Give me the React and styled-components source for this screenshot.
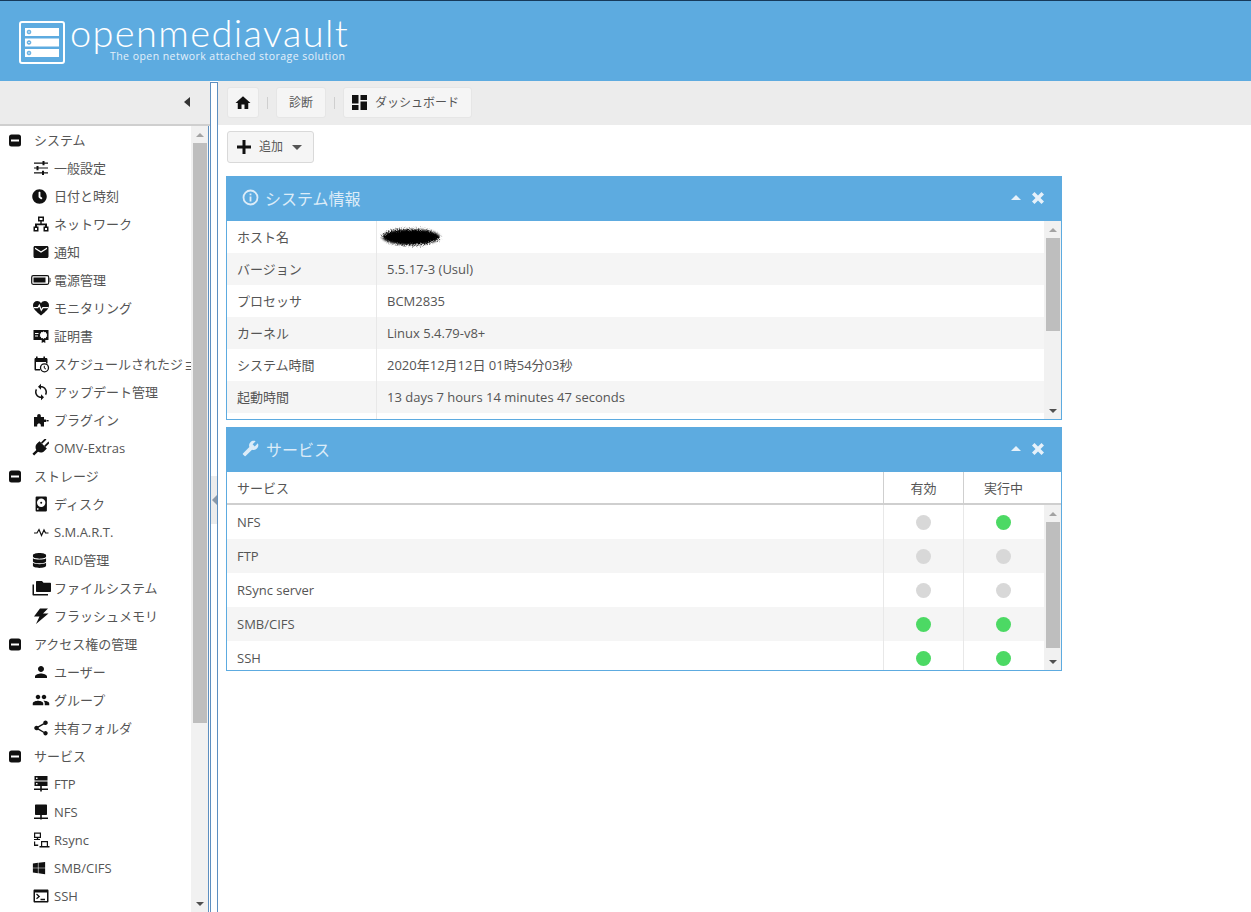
import React from "react";
import styled, { createGlobalStyle } from "styled-components";
import { MdEmail, MdSync, MdPerson, MdPeople, MdShare, MdHome, MdBuild } from "react-icons/md";
import { FaDatabase, FaWindows, FaClock } from "react-icons/fa";

const FONT = `"Open Sans", "Noto Sans CJK JP", sans-serif`;
const isCjk = (s) => /[^\x00-\x7f]/.test(s || "");

const Global = createGlobalStyle`
  html, body { margin: 0; padding: 0; height: 100%; overflow: hidden; background: #fff; }
  body { font-family: ${FONT}; font-size: 13px; color: #555; }
  * { box-sizing: border-box; }
`;

const Page = styled.div`
  width: 1251px;
  height: 912px;
  display: flex;
  flex-direction: column;
  overflow: hidden;
`;

const Header = styled.header`
  height: 81px;
  flex: none;
  background: #5dabe0;
  border-top: 1px solid #16395a;
  display: flex;
  align-items: flex-start;
  padding: 20px 0 0 19px;
`;

const Brand = styled.div`
  display: flex;
  gap: 5px;
`;

const BrandText = styled.div`
  position: relative;
  width: 280px;
`;

const BrandName = styled.div`
  font-family: "Lato", sans-serif;
  font-weight: 300;
  font-size: 38px;
  line-height: 23px;
  color: #fff;
  letter-spacing: 1.35px;
  white-space: nowrap;
`;

const Tagline = styled.div`
  position: absolute;
  left: 40px;
  top: 29px;
  font-family: "Open Sans", sans-serif;
  font-size: 10.5px;
  line-height: 13px;
  color: #e4f0fa;
  letter-spacing: 0.45px;
  white-space: nowrap;
`;

const Body = styled.div`
  flex: 1;
  min-height: 0;
  display: flex;
`;

const Side = styled.aside`
  width: 210px;
  flex: none;
  display: flex;
  flex-direction: column;
`;

const SideHead = styled.div`
  height: 45px;
  flex: none;
  background: #ececec;
  border-bottom: 2px solid #cfcfcf;
  display: flex;
  align-items: center;
  justify-content: flex-end;
  padding: 0 20px 2px 0;
`;

const ArrowLeft = styled.span`
  width: 0;
  height: 0;
  border-style: solid;
  border-width: 5px 6px 5px 0;
  border-color: transparent #333 transparent transparent;
`;

const SideBody = styled.div`
  flex: 1;
  min-height: 0;
  display: flex;
  margin-right: 1px;
  border-right: 1px solid #5d8fc0;
`;

const Tree = styled.nav`
  width: 191px;
  flex: none;
  overflow: hidden;
`;

const Row = styled.div`
  height: 28px;
  display: flex;
  align-items: center;
  white-space: nowrap;
  padding-left: ${(p) => (p.$group ? "9px" : "32px")};
  color: #555;
`;

const RowIcon = styled.span`
  width: ${(p) => (p.$group ? "25px" : "22px")};
  flex: none;
  display: flex;
  align-items: center;
  color: #111;
  svg { display: block; }
`;

const Lifted = styled.span`
  padding-bottom: ${(p) => (p.$lift ? "2px" : "0")};
`;

const Bar = styled.div`
  width: 17px;
  flex: none;
  background: #f1f1f1;
  display: flex;
  flex-direction: column;
  align-items: center;
`;

const BarEnd = styled.div`
  height: ${(p) => p.$h}px;
  flex: none;
  width: 100%;
  display: flex;
  align-items: center;
  justify-content: center;
  &::after {
    content: "";
    width: 0;
    height: 0;
    border-left: 4px solid transparent;
    border-right: 4px solid transparent;
    ${(p) => (p.$down ? "border-top: 4px solid #505050;" : "border-bottom: 4px solid #a3a3a3;")}
  }
`;

const Thumb = styled.div`
  width: 14px;
  height: ${(p) => p.$h}px;
  flex: none;
  background: #bebebe;
`;

const BarGap = styled.div`
  flex: 1;
`;

const Splitter = styled.div`
  width: 8px;
  flex: none;
  margin-top: 1px;
  border: 1px solid #5d8fc0;
  border-bottom: 0;
  background: #fff;
  position: relative;
`;

const SplitHandle = styled.div`
  position: absolute;
  top: 393px;
  left: 0;
  right: 0;
  height: 48px;
  background: #ececec;
  display: flex;
  align-items: center;
  justify-content: center;
  &::after {
    content: "";
    border-style: solid;
    border-width: 5px 5px 5px 0;
    border-color: transparent #8a98a8 transparent transparent;
  }
`;

const Main = styled.main`
  flex: 1;
  min-width: 0;
  display: flex;
  flex-direction: column;
`;

const Crumbs = styled.div`
  height: 44px;
  flex: none;
  background: #ececec;
  display: flex;
  align-items: center;
  padding: 0 0 1px 9px;
`;

const Crumb = styled.div`
  height: 31px;
  width: ${(p) => p.$w}px;
  background: #f5f5f5;
  border: 1px solid #e6e6e6;
  border-radius: 3px;
  display: flex;
  align-items: center;
  justify-content: center;
  gap: 8px;
  padding-right: ${(p) => p.$pr || 0}px;
  font-size: 12px;
  color: #555;
  svg { display: block; color: #111; }
`;

const Sep = styled.span`
  width: 1px;
  height: 12px;
  background: #cfcfcf;
  margin: 0 8px;
`;

const Content = styled.div`
  flex: 1;
  padding: 6px 0 0 8px;
`;

const AddButton = styled.button`
  width: 87px;
  height: 32px;
  font-family: ${FONT};
  font-size: 12px;
  color: #555;
  background: #f5f5f5;
  border: 1px solid #d9d9d9;
  border-radius: 3px;
  padding: 0 0 0 9px;
  margin: 0 0 13px 1px;
  display: flex;
  align-items: center;
  svg { display: block; }
`;

const AddIcon = styled.span`
  display: flex;
  margin-right: 8px;
`;

const AddCaret = styled.span`
  width: 0;
  height: 0;
  margin-left: 9px;
  border-left: 5px solid transparent;
  border-right: 5px solid transparent;
  border-top: 5px solid #555;
`;

const Panel = styled.section`
  width: 836px;
  height: ${(p) => p.$h}px;
  margin-bottom: 7px;
  border: 1px solid #5dabe0;
  border-top: 0;
  display: flex;
  flex-direction: column;
  overflow: hidden;
`;

const PanelHead = styled.div`
  height: 45px;
  flex: none;
  margin: 0 -1px;
  background: #5dabe0;
  color: #dcecf8;
  display: flex;
  align-items: center;
  padding: 0 18px 2px 16px;
  font-size: 16px;
`;

const PanelIcon = styled.span`
  display: flex;
  margin-right: ${(p) => p.$gap}px;
  color: #dcecf8;
`;

const PanelTitle = styled.span`
  flex: 1;
`;

const PanelTool = styled.span`
  display: flex;
  align-items: center;
`;

const ToolUp = styled.span`
  width: 0;
  height: 0;
  margin-right: 11px;
  border-left: 5px solid transparent;
  border-right: 5px solid transparent;
  border-bottom: 5px solid #e6f1fa;
`;

const PanelBody = styled.div`
  flex: 1;
  min-height: 0;
  display: flex;
`;

const Rows = styled.div`
  flex: 1;
  min-width: 0;
  overflow: hidden;
`;

const InfoRow = styled.div`
  height: 32px;
  display: flex;
  align-items: center;
  background: ${(p) => (p.$odd ? "#f5f5f5" : "#fff")};
`;

const InfoKey = styled.div`
  width: 150px;
  height: 100%;
  flex: none;
  display: flex;
  align-items: center;
  padding: 0 0 2px 10px;
  border-right: 1px solid #e8e8e8;
`;

const InfoVal = styled.div`
  flex: 1;
  padding-left: 10px;
  position: relative;
  display: flex;
`;

const RedactedMark = styled.svg`
  position: absolute;
  left: -2px;
  top: -15px;
`;

const GridHead = styled.div`
  height: 33px;
  flex: none;
  display: flex;
  border-bottom: 2px solid #cfcfcf;
`;

const HeadName = styled.div`
  flex: 1;
  display: flex;
  align-items: center;
  padding: 0 0 1px 10px;
`;

const HeadCol = styled.div`
  width: ${(p) => p.$w}px;
  flex: none;
  display: flex;
  align-items: center;
  justify-content: center;
  padding: 0 ${(p) => p.$pr || 0}px 1px 0;
  border-left: 1px solid #cfcfcf;
`;

const SvcRow = styled.div`
  height: 34px;
  display: flex;
  align-items: center;
  background: ${(p) => (p.$odd ? "#f5f5f5" : "#fff")};
`;

const SvcName = styled.div`
  flex: 1;
  padding-left: 10px;
`;

const SvcCell = styled.div`
  width: ${(p) => p.$w}px;
  height: 100%;
  flex: none;
  display: flex;
  align-items: center;
  justify-content: center;
  padding-right: ${(p) => p.$pr || 0}px;
  border-left: 1px solid #e8e8e8;
`;

const Dot = styled.span`
  width: 15px;
  height: 15px;
  border-radius: 50%;
  background: ${(p) => (p.$on ? "#4cd964" : "#d8d8d8")};
`;

const ic = 18;

const Redacted = () => (
  <RedactedMark width="72" height="30" viewBox="0 0 72 30">
    <defs>
      <filter id="scribble" x="-10%" y="-30%" width="120%" height="160%">
        <feGaussianBlur in="SourceGraphic" stdDeviation="1.2" result="soft" />
        <feTurbulence type="fractalNoise" baseFrequency="0.9" numOctaves="2" seed="4" result="noise" />
        <feDisplacementMap in="soft" in2="noise" scale="5" />
      </filter>
    </defs>
    <ellipse cx="36" cy="15" rx="29" ry="8" fill="#050505" filter="url(#scribble)" />
  </RedactedMark>
);
const MinusBox = () => (
  <svg width="12" height="13" viewBox="0 0 12 13">
    <rect x="0" y="0.5" width="12" height="12" rx="2.5" fill="#111" />
    <rect x="2" y="5.5" width="8" height="2" fill="#fff" />
  </svg>
);
const Svg = ({ children, w = 18 }) => (
  <svg width={w} height="18" viewBox={`0 0 ${w} 18`} fill="#111">{children}</svg>
);
const Tune = () => (
  <Svg>
    <path d="M2 3.5h14v1.200H2zM2 8.400h14v1.200H2zM2 13.300h14v1.200H2z" />
    <path d="M10.500 2h2v4.200h-2zM4.500 7h2v4.200h-2zM10 11.800h2V16h-2z" />
  </Svg>
);
const Net = () => (
  <Svg>
    <path d="M6 1.500h6v5H9.700v2H15v3h1.500v5h-5v-5H13v-1.200H5v1.200h1.500v5h-5v-5H3v-3h5.300v-2H6zM7.500 3v2h3V3zM3 13v2h2v-2zM13 13v2h2v-2z" fillRule="evenodd" />
  </Svg>
);
const Battery = () => (
  <svg width="21" height="18" viewBox="0 0 21 18" fill="none" style={{ marginLeft: -1 }}>
    <rect x="0.7" y="4.7" width="17" height="8.6" rx="1.5" stroke="#111" strokeWidth="1.2" />
    <rect x="2.5" y="6.5" width="12" height="5" fill="#111" />
    <path d="M19 7v4" stroke="#555" strokeWidth="1.2" />
  </svg>
);
const HeartPulse = () => (
  <Svg>
    <path d="M9 16.500C4 12.500 1 9.700 1 6.300 1 3.700 3 2 5.200 2 6.700 2 8.200 2.800 9 4.200 9.800 2.800 11.300 2 12.800 2 15 2 17 3.700 17 6.300c0 3.400-3 6.200-8 10.200z" />
    <path d="M1.500 8.700h4.300l1.500-2.500 2 5 1.600-2.500h5.600" fill="none" stroke="#fff" strokeWidth="1.200" />
  </Svg>
);
const Cert = () => (
  <Svg>
    <path fillRule="evenodd" d="M1.500 3h15v10h-3.200v3l-1.800-1-1.800 1v-3H1.500zM3 6h3.500v1H3zm0 2.500h3v1H3zm8.500-4.200 1 .9 1.300-.2.300 1.300 1.200.6-.6 1.200.6 1.200-1.200.6-.3 1.300-1.300-.2-1 .9-1-.9-1.300.2-.3-1.300-1.200-.6.6-1.200-.6-1.200 1.200-.6.3-1.300 1.300.2z" />
  </Svg>
);
const Schedule = () => (
  <Svg>
    <path d="M4 1.500h1.600V3h5.800V1.500H13V3h1.200c.8 0 1.300.6 1.300 1.300V8.500h-1.500V7H4v7h4v1.500H3.800c-.8 0-1.300-.6-1.300-1.300v-10C2.500 3.600 3 3 3.800 3H4z" />
    <circle cx="12.5" cy="12.8" r="4" fill="none" stroke="#111" strokeWidth="1.3" />
    <path d="M12.300 10.800v2.300l1.700 1" fill="none" stroke="#111" strokeWidth="1" />
  </Svg>
);
const Puzzle = () => (
  <Svg>
    <path d="M2 6h3.200V4.800C5.200 3.800 6 3 7 3s1.800.8 1.800 1.800V6H12v2.500h1c.9 0 1.500.5 1.500 1.200s-.6 1.300-1.500 1.300h-1v4.500H8.800v-1.500c0-.9-.8-1.500-1.800-1.500s-1.800.6-1.800 1.500V15.500H2z" />
    <rect x="14.800" y="9" width="1.800" height="1.400" />
  </Svg>
);
const Disk = () => (
  <Svg>
    <path fillRule="evenodd" d="M4.500 1.500h9.500c.5 0 .9.400.9.900v13.200c0 .5-.4.900-.9.900H4.500c-.5 0-.9-.4-.9-.9V2.400c0-.5.400-.9.900-.9zm4.700 2a4.200 4.200 0 1 0 0 8.400 4.200 4.200 0 0 0 0-8.400zm0 3.200a1 1 0 1 1 0 2 1 1 0 0 1 0-2zM5 13.200v1.500h1.500v-1.500z" />
  </Svg>
);
const Pulse = () => (
  <Svg>
    <path d="M2 10h3l2-3.500 2.500 6L12 7l1.500 3h3" fill="none" stroke="#111" strokeWidth="1.2" />
  </Svg>
);
const Folders = () => (
  <svg width="21" height="18" viewBox="0 0 21 18" fill="#111" style={{ marginLeft: -1 }}>
    <path d="M6 2h5l1.500 1.700H19c.6 0 1 .4 1 1V12c0 .6-.4 1-1 1H6c-.6 0-1-.4-1-1V3c0-.6.400-1 1-1z" />
    <path d="M1.500 5.500H3V15h14v1.500H2.500c-.6 0-1-.4-1-1z" />
  </svg>
);
const Bolt = () => (
  <Svg>
    <path d="M8 1.500h8l-5 5h5.500L4 17l3.500-7.500H2z" />
  </Svg>
);
const Server = () => (
  <Svg>
    <path fillRule="evenodd" d="M2.500 1h13v4.500h-13zM4 2.500v1.500h1.500V2.500zM2.500 6.500h13V11h-13zM4 8v1.500h1.500V8z" />
    <path d="M8.200 11h1.600v2.500H16V15H9.800v1.500H8.200V15H2v-1.500h6.200z" />
  </Svg>
);
const Nfs = () => (
  <Svg>
    <path d="M4 1.500h10c.6 0 1 .4 1 1V11c0 .6-.4 1-1 1H9.800v2.500H16V16H9.800c-.3 1-1.300 1-1.600 0H2v-1.500h6.200V12H4c-.6 0-1-.4-1-1V2.500c0-.6.400-1 1-1z" />
  </Svg>
);
const Rsync = () => (
  <Svg>
    <path fillRule="evenodd" d="M2 1.500h7v5.500H6.200v1.100H8V9H2V8.100h2.800V7H2zM3.200 2.700v3.100h4.600V2.700zM9 10h7v5h1.500v1.500h-10V15H9zm1.200 1.200V15h4.600v-3.800zM2 10.500h1.200v3h3V15H2z" />
  </Svg>
);
const Term = () => (
  <Svg>
    <path fillRule="evenodd" d="M2.500 2.500h13c.5 0 1 .5 1 1v11c0 .5-.5 1-1 1h-13c-.5 0-1-.5-1-1v-11c0-.5.500-1 1-1zM3 5.500V14h12V5.500z" />
    <path d="M4.500 7l2.700 2.400-2.700 2.400M8.500 12.500h4.500" fill="none" stroke="#111" strokeWidth="1.3" />
  </Svg>
);
const PlugArt = () => (
  <svg width="18" height="18" viewBox="0 0 18 18" fill="#111" style={{ marginLeft: -1 }}>
    <g transform="rotate(45 9 9)">
      <rect x="5.8" y="-1.5" width="1.8" height="6" />
      <rect x="10.4" y="-1.5" width="1.8" height="6" />
      <path d="M3.800 4.500h10.400v3.500c0 2.800-2 4.500-4 5v5.500H7.800V13c-2-.5-4-2.200-4-5z" />
    </g>
  </svg>
);
const DashIcon = () => (
  <svg width="15" height="15" viewBox="0 0 15 15" fill="#111">
    <rect x="0" y="0" width="6.5" height="8.5" /><rect x="8.5" y="0" width="6.5" height="5" />
    <rect x="0" y="10" width="6.5" height="5" /><rect x="8.5" y="6.5" width="6.5" height="8.5" />
  </svg>
);
const Plus = () => (
  <svg width="14" height="14" viewBox="0 0 14 14" fill="#111">
    <path d="M5.500 0h3v5.500H14v3H8.500V14h-3V8.500H0v-3h5.500z" />
  </svg>
);
const InfoCircle = () => (
  <svg width="17" height="17" viewBox="0 0 17 17" fill="none">
    <circle cx="8.5" cy="8.5" r="7" stroke="#dcecf8" strokeWidth="1.8" />
    <rect x="7.6" y="7.5" width="1.8" height="5" fill="#dcecf8" />
    <rect x="7.6" y="4.5" width="1.8" height="1.8" fill="#dcecf8" />
  </svg>
);
const CloseX = () => (
  <svg width="12" height="12" viewBox="0 0 12 12" fill="#e6f1fa">
    <path d="M2.500 0 6 3.500 9.500 0 12 2.500 8.500 6 12 9.500 9.500 12 6 8.500 2.500 12 0 9.500 3.500 6 0 2.500z" />
  </svg>
);

const nav = [
  { g: "システム" },
  { t: "一般設定", i: <Tune /> },
  { t: "日付と時刻", i: <FaClock size={15} /> },
  { t: "ネットワーク", i: <Net /> },
  { t: "通知", i: <MdEmail size={ic} /> },
  { t: "電源管理", i: <Battery /> },
  { t: "モニタリング", i: <HeartPulse /> },
  { t: "証明書", i: <Cert /> },
  { t: "スケジュールされたジョブ", i: <Schedule /> },
  { t: "アップデート管理", i: <MdSync size={ic} /> },
  { t: "プラグイン", i: <Puzzle /> },
  { t: "OMV-Extras", i: <PlugArt /> },
  { g: "ストレージ" },
  { t: "ディスク", i: <Disk /> },
  { t: "S.M.A.R.T.", i: <Pulse /> },
  { t: "RAID管理", i: <FaDatabase size={15} /> },
  { t: "ファイルシステム", i: <Folders /> },
  { t: "フラッシュメモリ", i: <Bolt /> },
  { g: "アクセス権の管理" },
  { t: "ユーザー", i: <MdPerson size={ic} /> },
  { t: "グループ", i: <MdPeople size={ic} /> },
  { t: "共有フォルダ", i: <MdShare size={ic} /> },
  { g: "サービス" },
  { t: "FTP", i: <Server /> },
  { t: "NFS", i: <Nfs /> },
  { t: "Rsync", i: <Rsync /> },
  { t: "SMB/CIFS", i: <FaWindows size={14} /> },
  { t: "SSH", i: <Term /> },
];

const info = [
  ["ホスト名", null],
  ["バージョン", "5.5.17-3 (Usul)"],
  ["プロセッサ", "BCM2835"],
  ["カーネル", "Linux 5.4.79-v8+"],
  ["システム時間", "2020年12月12日 01時54分03秒"],
  ["起動時間", "13 days 7 hours 14 minutes 47 seconds"],
  ["", ""],
];

const services = [
  ["NFS", false, true],
  ["FTP", false, false],
  ["RSync server", false, false],
  ["SMB/CIFS", true, true],
  ["SSH", true, true],
];

const Logo = () => (
  <svg width="46" height="43" viewBox="0 0 46 43" fill="none">
    <rect x="1" y="1" width="44" height="41" rx="2" stroke="#fff" strokeWidth="2" />
    {[7, 17.5, 28].map((y) => (
      <g key={y}>
        <rect x="6" y={y} width="34" height="8" fill="#fff" />
        <circle cx="10" cy={y + 4} r="2" fill="#5dabe0" stroke="#5dabe0" strokeWidth="0.5" />
        <circle cx="10" cy={y + 4} r="0.8" fill="#fff" />
      </g>
    ))}
  </svg>
);

const PanelHeader = ({ icon, title, gap }) => (
  <PanelHead>
    <PanelIcon $gap={gap}>{icon}</PanelIcon>
    <PanelTitle>{title}</PanelTitle>
    <ToolUp />
    <PanelTool><CloseX /></PanelTool>
  </PanelHead>
);

export default function App() {
  return (
    <Page>
      <Global />
      <Header>
        <Brand>
          <Logo />
          <BrandText>
            <BrandName>openmediavault</BrandName>
            <Tagline>The open network attached storage solution</Tagline>
          </BrandText>
        </Brand>
      </Header>
      <Body>
        <Side>
          <SideHead><ArrowLeft /></SideHead>
          <SideBody>
            <Tree>
              {nav.map((n) =>
                n.g ? (
                  <Row key={n.g} $group>
                    <RowIcon $group><MinusBox /></RowIcon>
                    <Lifted $lift>{n.g}</Lifted>
                  </Row>
                ) : (
                  <Row key={n.t}>
                    <RowIcon>{n.i}</RowIcon>
                    <Lifted $lift={isCjk(n.t)}>{n.t}</Lifted>
                  </Row>
                )
              )}
            </Tree>
            <Bar>
              <BarEnd $h={17} />
              <Thumb $h={580} />
              <BarGap />
              <BarEnd $h={17} $down />
            </Bar>
          </SideBody>
        </Side>
        <Splitter><SplitHandle /></Splitter>
        <Main>
          <Crumbs>
            <Crumb $w={32}><MdHome size={18} /></Crumb>
            <Sep />
            <Crumb $w={50}><Lifted $lift>診断</Lifted></Crumb>
            <Sep />
            <Crumb $w={129} $pr={4}><DashIcon /><Lifted $lift>ダッシュボード</Lifted></Crumb>
          </Crumbs>
          <Content>
            <AddButton>
              <AddIcon><Plus /></AddIcon>
              <Lifted $lift>追加</Lifted>
              <AddCaret />
            </AddButton>
            <Panel $h={244}>
              <PanelHeader icon={<InfoCircle />} title="システム情報" gap={6} />
              <PanelBody>
                <Rows>
                  {info.map(([k, v], i) => (
                    <InfoRow key={i} $odd={i % 2 === 1}>
                      <InfoKey>{k}</InfoKey>
                      <InfoVal>{v === null ? <Redacted /> : <Lifted $lift={isCjk(v)}>{v}</Lifted>}</InfoVal>
                    </InfoRow>
                  ))}
                </Rows>
                <Bar>
                  <BarEnd $h={17} />
                  <Thumb $h={93} />
                  <BarGap />
                  <BarEnd $h={17} $down />
                </Bar>
              </PanelBody>
            </Panel>
            <Panel $h={244}>
              <PanelHeader icon={<MdBuild size={17} style={{ transform: "scaleX(-1)" }} />} title="サービス" gap={7} />
              <GridHead>
                <HeadName>サービス</HeadName>
                <HeadCol $w={80}>有効</HeadCol>
                <HeadCol $w={98} $pr={18}>実行中</HeadCol>
              </GridHead>
              <PanelBody>
                <Rows>
                  {services.map(([n, a, b], i) => (
                    <SvcRow key={n} $odd={i % 2 === 1}>
                      <SvcName>{n}</SvcName>
                      <SvcCell $w={80}><Dot $on={a} /></SvcCell>
                      <SvcCell $w={81} $pr={1}><Dot $on={b} /></SvcCell>
                    </SvcRow>
                  ))}
                </Rows>
                <Bar>
                  <BarEnd $h={17} />
                  <Thumb $h={126} />
                  <BarGap />
                  <BarEnd $h={17} $down />
                </Bar>
              </PanelBody>
            </Panel>
          </Content>
        </Main>
      </Body>
    </Page>
  );
}
